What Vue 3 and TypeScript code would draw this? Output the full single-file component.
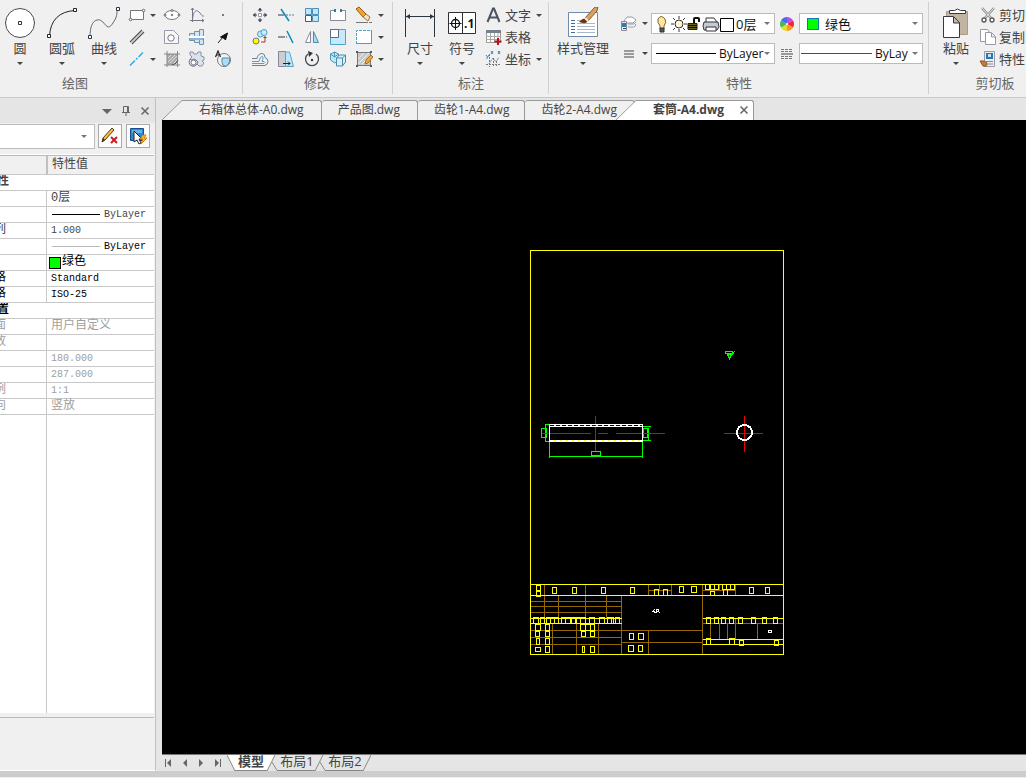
<script setup lang="ts">
import { ref } from 'vue'

type Box = [number, number, number, number]

interface PropRow {
  label?: string
  value?: string
  kind?: 'heading' | 'line' | 'tint'
  tone?: 'strong' | 'muted'
  wide?: boolean
}

const icons: Record<string, string> = {
  rect: '<path d="M2.500 4.500h13v9h-13z" fill="#fff" stroke="#777"/><circle cx="2.500" cy="13.500" r="1.300" fill="#fff" stroke="#667"/><circle cx="15.500" cy="4.500" r="1.300" fill="#fff" stroke="#667"/>',
  ellipse: '<ellipse cx="9" cy="9" rx="7" ry="4.500" fill="#fff" stroke="#777"/><g fill="#fff" stroke="#667"><circle cx="2" cy="9" r="1"/><circle cx="16" cy="9" r="1"/><circle cx="9" cy="4.500" r="1"/><circle cx="9" cy="9" r=".8"/></g>',
  graph: '<path d="M4.500 2v14M2 14.500h14M3 4l1.500-2L6 4M14 13l2 1.500-2 1.500" fill="none" stroke="#778"/><path d="M4.500 14C5 4 9 3 12 7s2 3 4 3" fill="none" stroke="#778"/>',
  dot: '<path d="M8 8h2v2H8z" fill="#778"/>',
  parallel: '<path d="M2 14L14 2M4 16L16 4" stroke="#555" stroke-width="1.200"/><path d="M3 15L15 3" stroke="#ccc"/>',
  contour: '<path d="M1.500 2.500h9l5 5v8h-14z" fill="#f8f8f8" stroke="#99a"/><circle cx="8" cy="10" r="3.200" fill="#fff" stroke="#778"/>',
  shaft: '<path d="M1.500 5.500h5v-2h5v-2h4v15h-4v-2h-5v-2h-5z" fill="#d4e5f3" stroke="#7890a8"/><path d="M6.500 5v8M11.500 3v12" stroke="#7890a8"/><path d="M1 8h16v2H1z" fill="#fff"/><path d="M2 10h13v2H2z" fill="#8db7da"/>',
  arrow: '<path d="M4 15l5-6" stroke="#222"/><path d="M13.500 5l-2 7-2-2-3-1z" fill="#111" stroke="#111"/>',
  centre: '<path d="M2 15.500L15 2.500" stroke="#2aaee8" stroke-width="1.500" stroke-dasharray="7 1.500 2 1.500"/>',
  hatch: '<path d="M4 4h11v8l-4 3H4z" fill="#aaa"/><path d="M1 4h16M4 1v16M1 15h16M14.500 1v16" stroke="#888"/><path d="M5 8l3-3M5 12l7-7M7 13l7-7M10 14l4-4" stroke="#ddd"/><path d="M9 15q5-1 6-5" fill="none" stroke="#555"/>',
  gear: '<path d="M2 2h3l1 2h3l1-2h3v4l3 1v3l-2 1 2 2-2 3h-3l-2-2-3 2H4l-2-2V9l2-2-2-2z" fill="#dce2ec" stroke="#8992a2"/><path d="M2 9.500l2 .5 2-1 2 1 2 2-1 2-2 2H4l-2-1-1-3z" fill="#eef1f6" stroke="#778"/><circle cx="5.500" cy="12.500" r="2.500" fill="#fff" stroke="#778"/>',
  sector: '<circle cx="10" cy="10" r="6.500" fill="#f4f4f4" stroke="#778"/><path d="M8 8h8q0 6-4 8.500-4-1-4-4z" fill="#a9ddfa" stroke="#589"/><path d="M1.500 7L4 1l2.500 6M2.500 5h3" fill="none" stroke="#222" stroke-width="1.200"/>',
  move: '<path d="M9 2v4M9 12v4M2 9h4M12 9h4" stroke="#445"/><path d="M6.500 4.500L9 2l2.500 2.500zM6.500 13.500L9 16l2.500-2.500zM4.500 6.500L2 9l2.500 2.500zM13.500 6.500L16 9l-2.500 2.500z" fill="#445"/><path d="M7.500 7.500h3v3h-3z" fill="#fff" stroke="#99a"/>',
  trim: '<path d="M1 9h6" stroke="#334"/><path d="M9 9h8" stroke="#48a" stroke-dasharray="2 1"/><path d="M4 3l8 12" stroke="#18b" stroke-width="1.500"/>',
  array: '<path d="M2.500 2.500h6v6h-6zM9.500 2.500h6v6h-6zM9.500 9.500h6v6h-6z" fill="#bfe7fb" stroke="#4d8fb5"/><path d="M2.500 9.500h6v6h-6z" fill="#fff" stroke="#556"/>',
  breakAt: '<path d="M6 4.500H1.500v10h15v-10H12" fill="#fff" stroke="#889"/><path d="M5 3h2v3H5zM11 3h2v3h-2z" fill="#18b"/>',
  erase: '<path d="M1 3l3-2 7 7-3 3z" fill="#f5a52a" stroke="#8b5a13"/><path d="M8 11l3-3 4 3-2 4z" fill="#f6e3c0" stroke="#96704a"/><path d="M1 16.500h12M14 16.500h3" stroke="#777"/>',
  copyObj: '<g fill="#c4eafc" stroke="#45a0cc"><circle cx="9.500" cy="6" r="3"/><circle cx="13" cy="4.500" r="3"/></g><circle cx="5" cy="13" r="3" fill="#ff0" stroke="#777"/><path d="M10 14h4V9" fill="none" stroke="#a33"/><path d="M12 10l2-2 2 2z" fill="#a33"/>',
  extend: '<path d="M1 9h5" stroke="#334"/><path d="M6 9h4" stroke="#334" stroke-dasharray="2 1"/><path d="M10 3l6 12" stroke="#18b" stroke-width="1.500"/>',
  mirror: '<path d="M7.500 3.500v11h-5z" fill="#fff" stroke="#889"/><path d="M10.500 3.500v11h5z" fill="#a5ddf5" stroke="#4c8da8"/>',
  scale: '<path d="M1.500 1.500h15v15h-15z" fill="#c5eafc" stroke="#4aa4cb"/><path d="M1.500 1.500h8v8h-8z" fill="#fff" stroke="#667"/>',
  stretch: '<path d="M1.500 2.500h15v13h-15z" fill="#fff"/><path d="M16.500 2v14M16 15.500H1" stroke="#889"/><path d="M1.500 16V2.500H16" fill="none" stroke="#4ba4cc" stroke-dasharray="3 1"/>',
  offset: '<path d="M1 8.500h5q1-5 5-5 3 0 3 4 3 1 3 4t-3 4H1" fill="none" stroke="#67829a"/><path d="M1 11.500h7q1-5 3-5t0 5h2q2 1 0 2H1" fill="none" stroke="#4aa4cb"/>',
  shear: '<path d="M1.500 1.500h7v15h-7z" fill="#c9ced3" stroke="#889"/><path d="M8.500 2h4l4 14.500h-8z" fill="#bfe7fb" stroke="#56a9cc"/><path d="M6 13.500h7M11 11.500l2 2-2 2" fill="none" stroke="#222"/>',
  rotate: '<path d="M5 4a6.500 6.500 0 1 0 8 0" fill="none" stroke="#445" stroke-width="1.300"/><path d="M5 1l5 2-4 4z" fill="#334"/><circle cx="9" cy="10" r="1.200" fill="#334"/>',
  solid: '<path d="M1.500 4l4-2 4 2v7l-4 2-4-3zM5.500 2v5l-4-3M5.500 7l4-3" fill="#bde6f9" stroke="#4b96bd"/><path d="M7.500 8l3-3h6v7l-3 4h-6zM7.500 8h6v8M13.500 8l3-3" fill="#d7f1fc" stroke="#4b8bb0"/>',
  hatchEdit: '<path d="M2.500 2.500h13v13h-13z" fill="#c9c9c9" stroke="#777"/><path d="M3 9l6-6M3 14L14 3M7 14l7-7" stroke="#eee"/><path d="M1 2h2M15 2h2M1 16h2M15 16h2" stroke="#555" stroke-width="2"/><path d="M10 14l1-4 5-5 2 2-5 6z" fill="#f2a62d" stroke="#a0702b"/>',
  textA: '<path d="M2.500 16L8 2.500h1L14.500 16M4.500 11.500h8" fill="none" stroke="#4c5460" stroke-width="2"/>',
  grid: '<path d="M1.500 2.500h14v12h-14z" fill="#fff" stroke="#999"/><path d="M1 2h15v3H1z" fill="#76818a"/><path d="M1 8.500h15M1 11.500h15M5.500 5v10M9.500 5v10M13 5v10" stroke="#aaa"/><path d="M13 10v7M9.500 13.500h7" stroke="#b3131b" stroke-width="2"/>',
  coord: '<path d="M4.500 4v13M1 14.500h15M4 14l4-6 3 4 3-5M8.500 8v9M11.500 11v6" fill="none" stroke="#778" stroke-dasharray="2 1"/><path d="M1 5l1.500 2M4 5L1.500 9M6 1l2 3M8 1L6 4M13 1l2 3M15 1l-2 3" stroke="#2f86d0"/>',
  layers: '<path d="M5 6l3-4h5l4 3-3 3H7zM9 9h6l2-2M9 12h6l2-2M15 8l2 2" fill="#fff" stroke="#99a"/><path d="M2.500 6.500h5v9h-5z" fill="#eee" stroke="#889"/><path d="M3 8h4v4H3z" fill="#2d7bb5"/><path d="M4 13.500h3" stroke="#444"/>',
  weight: '<path d="M5 6h10M5 9h10M5 12h10" stroke="#444" stroke-width="1"/>',
  wheel: '<path d="M9 9V2a7 7 0 0 1 6 3.500z" fill="#c44be8"/><path d="M9 9l6-3.500a7 7 0 0 1 0 7z" fill="#ef2b2b"/><path d="M9 9l6 3.500A7 7 0 0 1 9 16z" fill="#ff961f"/><path d="M9 9v7a7 7 0 0 1-6-3.500z" fill="#efd72d"/><path d="M9 9l-6 3.500a7 7 0 0 1 0-7z" fill="#43bd49"/><path d="M9 9L3 5.500A7 7 0 0 1 9 2z" fill="#4b67f2"/><circle cx="9" cy="9" r="1" fill="#fff"/>',
  linetype: '<path d="M3 4.500h12M3 6.500h12M3 11.500h12M3 13.500h12" stroke="#777" stroke-dasharray="3 1"/><path d="M3 9h12" stroke="#444"/>',
  cut: '<path d="M3 2l9 10M15 2L6 12" stroke="#888" stroke-width="2.500"/><path d="M3 2l9 10M15 2L6 12" stroke="#eee"/><circle cx="5" cy="14" r="2" fill="#fff" stroke="#555" stroke-width="1.300"/><circle cx="13" cy="14" r="2" fill="#fff" stroke="#555" stroke-width="1.300"/>',
  copy: '<path d="M1.500 1.500h7l2 3v9h-9z" fill="#fff" stroke="#99a"/><path d="M6.500 4.500h6l4 4v8h-10zM12.500 5v4h4" fill="#fff" stroke="#99a"/>',
  match: '<path d="M5.500 1.500h10v15h-10z" fill="#eee" stroke="#99a"/><path d="M7 3h7v6H7z" fill="#2a77b6"/><path d="M9 4h3v3H9z" fill="#bfe0f5"/><path d="M7 11.500h7M9 14h5" stroke="#888"/><path d="M1 11q5-1 7 2 1 4-4 3z" fill="#c47b35" stroke="#8b5a2b"/>',
}

const big: Record<string, string> = {
  circle: '<circle cx="16" cy="16" r="14.500" fill="#fff" stroke="#444a54"/><path d="M14.500 14.500h3v3h-3z" fill="#fff" stroke="#333"/>',
  arc: '<path d="M3.500 29Q5 5 29 3.500" fill="none" stroke="#222"/><path d="M1.500 27.500h3v3h-3zM27.500 1.500h3v3h-3z" fill="#fff" stroke="#222"/>',
  curve: '<path d="M2 30C2 21 4 14 9 13c8-2 9 14 16 3 4-6 4-9 4-13" fill="none" stroke="#667"/><path d="M.5 28.500h3v3h-3zM28.500.5h3v3h-3z" fill="#fff" stroke="#334"/>',
  dimension: '<path d="M1.500 2v28M30.500 2v28M2 9.500h28" stroke="#2d3540"/><path d="M2 9.500l4-2.500v5zM30 9.500L26 7v5z" fill="#2d3540"/>',
  symbol: '<path d="M2.500 5.500h27v21h-27zM16.500 5v21" fill="#fff" stroke="#2d3035"/><circle cx="9.500" cy="16.500" r="4" fill="none" stroke="#111" stroke-width="1.300"/><path d="M9.500 10v13M3.500 16.500h12" stroke="#111"/><text x="18" y="21" font-size="12" font-weight="700" fill="#111">.1</text>',
  styles: '<path d="M1.500 5.500h29v24h-29z" fill="#fff" stroke="#6f8ba8"/><path d="M4 13.500h4M4 16.500h4M4 19.500h4M4 22.500h4M4 25.500h4" stroke="#456b94"/><path d="M10 13.500h10M10 16.500h18M10 19.500h18M10 22.500h18M10 25.500h18" stroke="#a8b8cb"/><path d="M18 11L28 0h3l-1 4-9 10z" fill="#dba05f" stroke="#8a5a2b"/><path d="M12 15q5-6 9-2-1 5-9 2z" fill="#6b3413"/><path d="M18 11l3 3" stroke="#eee" stroke-width="2"/>',
  paste: '<path d="M6.500 4.500h21v23h-21z" fill="#c2b4a2" stroke="#aa9a86"/><path d="M9.500 6.500v-3h5q3-3 6 0h5v3z" fill="#fff" stroke="#333a44"/><path d="M3.500 9.500h10l6 6v15h-16zM13.500 10v6h6" fill="#fff" stroke="#333a44"/>',
}

const drawBig = [
  { icon: 'circle', label: '圆' },
  { icon: 'arc', label: '圆弧' },
  { icon: 'curve', label: '曲线' },
]
const drawSmall = ['rect', '+', 'ellipse', 'graph', 'dot', 'parallel', '', 'contour', 'shaft', 'arrow', 'centre', '+', 'hatch', 'gear', 'sector']
const modifySmall = [
  'move', 'trim', 'array', 'breakAt', 'erase', '+',
  'copyObj', 'extend', 'mirror', 'scale', 'stretch', '+',
  'offset', 'shear', 'rotate', 'solid', 'hatchEdit', '+',
]
const annotateBig = [
  { icon: 'dimension', label: '尺寸' },
  { icon: 'symbol', label: '符号' },
]
const annotateList = [
  { icon: 'textA', label: '文字', more: true },
  { icon: 'grid', label: '表格', more: false },
  { icon: 'coord', label: '坐标', more: true },
]
const clipList = [
  { icon: 'cut', label: '剪切' },
  { icon: 'copy', label: '复制' },
  { icon: 'match', label: '特性' },
]

const files = ['右箱体总体-A0.dwg', '产品图.dwg', '齿轮1-A4.dwg', '齿轮2-A4.dwg']
const sheet = ref('模型')

const rows: PropRow[] = [
  { label: '性', kind: 'heading' },
  { value: '0层', wide: true },
  { value: 'ByLayer', kind: 'line' },
  { label: '列', value: '1.000' },
  { value: 'ByLayer', kind: 'line', tone: 'strong' },
  { value: '绿色', kind: 'tint', tone: 'strong', wide: true },
  { label: '格', value: 'Standard', tone: 'strong' },
  { label: '格', value: 'ISO-25', tone: 'strong' },
  { label: '置', kind: 'heading', tone: 'strong' },
  { label: '面', value: '用户自定义', tone: 'muted', wide: true },
  { label: '放', value: '', tone: 'muted' },
  { value: '180.000', tone: 'muted' },
  { value: '287.000', tone: 'muted' },
  { label: '例', value: '1:1', tone: 'muted' },
  { label: '向', value: '竖放', tone: 'muted', wide: true },
]

const textBoxes: Box[] = [
  [536, 585, 4, 5], [536, 591, 4, 5], [552, 587, 4, 6], [572, 587, 4, 6], [601, 587, 4, 6], [630, 587, 4, 6],
  [654, 589, 4, 6], [663, 589, 4, 6], [679, 586, 4, 6], [691, 586, 5, 6],
  [705, 584, 4, 5], [710, 584, 4, 5], [714, 584, 4, 5], [722, 584, 4, 5], [726, 584, 4, 5], [730, 584, 4, 5],
  [710, 591, 4, 4], [723, 589, 4, 6], [749, 587, 4, 6], [765, 587, 4, 6],
  [533, 617, 5, 6], [540, 617, 4, 6], [546, 617, 4, 6], [550, 617, 4, 6], [554, 617, 4, 6], [561, 617, 4, 6],
  [565, 617, 5, 6], [571, 617, 4, 6], [576, 617, 4, 6], [580, 617, 5, 6], [589, 617, 5, 6], [599, 617, 5, 6],
  [607, 617, 4, 6], [611, 617, 2, 6], [615, 617, 4, 6],
  [535, 624, 5, 6], [545, 624, 4, 6], [580, 624, 5, 6], [585, 624, 5, 6], [590, 624, 4, 6],
  [535, 631, 4, 5], [545, 631, 4, 5], [581, 631, 4, 5], [590, 631, 4, 5],
  [536, 638, 3, 6], [545, 638, 4, 6],
  [535, 647, 5, 4], [545, 646, 4, 6], [582, 646, 2, 6], [590, 646, 4, 6],
  [629, 633, 4, 6], [638, 633, 5, 6], [628, 645, 5, 6], [638, 645, 4, 6],
  [706, 617, 4, 6], [714, 617, 4, 6], [721, 617, 4, 6], [729, 617, 4, 6], [738, 617, 4, 6], [751, 617, 4, 6],
  [762, 617, 4, 6], [773, 617, 4, 6],
  [706, 638, 4, 6], [729, 638, 5, 6], [739, 640, 4, 5], [774, 640, 4, 5],
]

const hatchMarks = Array.from({ length: 15 }, (_, i) => 553 + i * 6)
</script>

<template>
  <div class="app">
    <header class="ribbon">
      <section class="group draw">
        <div class="body">
          <button v-for="b in drawBig" :key="b.label" class="big" type="button">
            <svg class="i32" viewBox="0 0 32 32" v-html="big[b.icon]" /><span>{{ b.label }}</span><i class="caret" />
          </button>
          <div class="small-grid">
            <template v-for="(name, n) in drawSmall" :key="n">
              <button v-if="name === '+'" class="tool" type="button" aria-label="更多"><i class="caret" /></button>
              <span v-else-if="!name" />
              <button v-else class="tool" type="button" :aria-label="name"><svg class="i18" viewBox="0 0 18 18" v-html="icons[name]" /></button>
            </template>
          </div>
        </div>
        <h2>绘图</h2>
      </section>

      <section class="group modify">
        <div class="body">
          <div class="small-grid">
            <button v-for="(name, n) in modifySmall" :key="n" class="tool" type="button" :aria-label="name">
              <i v-if="name === '+'" class="caret" />
              <svg v-else class="i18" viewBox="0 0 18 18" v-html="icons[name]" />
            </button>
          </div>
        </div>
        <h2>修改</h2>
      </section>

      <section class="group annotate">
        <div class="body">
          <button v-for="b in annotateBig" :key="b.label" class="big" type="button">
            <svg class="i32" viewBox="0 0 32 32" v-html="big[b.icon]" /><span>{{ b.label }}</span><i class="caret" />
          </button>
          <div class="list">
            <button v-for="b in annotateList" :key="b.label" class="row" type="button">
              <svg class="i18" viewBox="0 0 18 18" v-html="icons[b.icon]" /><span>{{ b.label }}</span><i v-if="b.more" class="caret" />
            </button>
          </div>
        </div>
        <h2>标注</h2>
      </section>

      <section class="group props">
        <div class="body">
          <button class="big" type="button">
            <svg class="i32" viewBox="0 0 32 32" v-html="big.styles" /><span>样式管理</span><i class="caret" />
          </button>
          <div class="prop-grid">
            <button class="tool" type="button" aria-label="图层"><svg class="i18" viewBox="0 0 18 18" v-html="icons.layers" /></button>
            <button class="tool" type="button" aria-label="图层选项"><i class="caret" /></button>
            <div class="combo">
              <svg class="layer-state" viewBox="0 0 80 20" aria-hidden="true">
                <path d="M4 12Q1 8 2 5q3-5 7 0 2 3-1 7v3H4z" fill="#ffe7a0" stroke="#7b6232" />
                <path d="M4 14h4v4H4z" fill="#555" stroke="#333" />
                <g stroke="#333"><path d="M23 2v3M23 15v3M15 10h3M28 10h3M17 4l2 2M29 4l-2 2M17 16l2-2M29 16l-2-2" /><circle cx="23" cy="10" r="4" fill="#fff4d5" /></g>
                <path d="M32 9.500h9v6h-9z" fill="#6b6310" stroke="#222" /><path d="M32 11.500h9M32 13.500h9" stroke="#111" /><path d="M38 9V5q0-1 1-1h3q1 0 1 1v3" fill="none" stroke="#111" stroke-width="2" />
                <path d="M50 8V4h8l3 4" fill="#fff" stroke="#333" /><path d="M48 8h14l1 5-2 3H48l-1-4z" fill="#c3ccd6" stroke="#333" /><path d="M50 13h10v4H50z" fill="#fff" stroke="#333" />
                <path d="M64.500 4.500h13v13h-13z" fill="#fff" stroke="#000" />
              </svg>
              <select aria-label="当前图层"><option>0层</option></select><i class="caret grey" />
            </div>
            <button class="tool" type="button" aria-label="颜色"><svg class="i18" viewBox="0 0 18 18" v-html="icons.wheel" /></button>
            <div class="combo colour"><i class="swatch" /><select aria-label="当前颜色"><option>绿色</option></select><i class="caret grey" /></div>
            <button class="tool" type="button" aria-label="线宽"><svg class="i18" viewBox="0 0 18 18" v-html="icons.weight" /></button>
            <button class="tool" type="button" aria-label="线宽选项"><i class="caret" /></button>
            <div class="combo by-layer"><i class="stroke" /><select aria-label="当前线宽"><option>ByLayer</option></select><i class="caret grey" /></div>
            <button class="tool" type="button" aria-label="线型"><svg class="i18" viewBox="0 0 18 18" v-html="icons.linetype" /></button>
            <div class="combo by-layer line-type"><i class="stroke red" /><select aria-label="当前线型"><option>ByLayer</option></select><i class="caret grey" /></div>
          </div>
        </div>
        <h2>特性</h2>
      </section>

      <section class="group clip">
        <div class="body">
          <button class="big" type="button">
            <svg class="i32" viewBox="0 0 32 32" v-html="big.paste" /><span>粘贴</span><i class="caret" />
          </button>
          <div class="list">
            <button v-for="b in clipList" :key="b.label" class="row" type="button">
              <svg class="i18" viewBox="0 0 18 18" v-html="icons[b.icon]" /><span>{{ b.label }}</span>
            </button>
          </div>
        </div>
        <h2>剪切板</h2>
      </section>
    </header>

    <div class="work">
      <aside class="panel">
        <div class="panel-title">
          <button type="button" aria-label="菜单"><svg width="10" height="10" viewBox="0 0 10 10"><path d="M0 3h10L5 8z" fill="#666" /></svg></button>
          <button type="button" aria-label="固定"><svg width="10" height="10" viewBox="0 0 10 10"><path d="M2.500 6V.5h5V6M1 6.500h8M5 7v3M6.500 1v5" fill="none" stroke="#666" /></svg></button>
          <button type="button" aria-label="关闭"><svg width="10" height="10" viewBox="0 0 10 10"><path d="M1.500 1.500l7 7M8.500 1.500l-7 7" stroke="#666" stroke-width="1.500" /></svg></button>
        </div>
        <div class="picker">
          <div class="pick-combo"><select aria-label="选择对象"><option /></select><i class="caret grey" /></div>
          <button type="button" aria-label="清除选择">
            <svg class="i18" viewBox="0 0 18 18"><path d="M1 15l1-4L11 1l2 2-9 10z" fill="#f8bd42" stroke="#513b17" /><path d="M1 15l1-4 2 2z" fill="#333" /><path d="M10 10l6 6M16 10l-6 6" stroke="#d11a1a" stroke-width="2" /></svg>
          </button>
          <button type="button" aria-label="快速选择">
            <svg class="i18" viewBox="0 0 18 18"><path d="M1.500 1.500h13v12h-13z" fill="#3287cc" stroke="#194f91" /><path d="M3 3h10v3H3z" fill="#65b5ec" /><path d="M5 4v11l3-2 2 4 2-1-2-4h3z" fill="#fff" stroke="#222" /><path d="M14 8l-3 4h3l-2 5 6-6h-3l2-3z" fill="#ffba22" stroke="#d77b0c" /></svg>
          </button>
        </div>
        <div class="table-box">
          <table>
            <thead><tr><th /><th>特性值</th></tr></thead>
            <tbody>
              <tr v-for="(r, n) in rows" :key="n" :class="[r.kind, r.tone]">
                <td v-if="r.kind === 'heading'" colspan="2"><div class="cut-label long">{{ r.label }}</div></td>
                <template v-else>
                  <td><div class="cut-label">{{ r.label }}</div></td>
                  <td class="value"><div :class="{ wide: r.wide }"><i v-if="r.kind" />{{ r.value }}</div></td>
                </template>
              </tr>
            </tbody>
          </table>
          <div class="rest" />
        </div>
        <div class="hint" />
      </aside>

      <main class="stage">
        <nav class="file-tabs">
          <svg class="slant" viewBox="0 0 21 20"><path d="M0 20L20 .5h1V20z" fill="#f0f0f0" /><path d="M0 20L20 .5h1" fill="none" stroke="#999" /></svg>
          <button v-for="(f, n) in files" :key="f" type="button" :class="'file f' + n">{{ f }}</button>
          <svg class="slant over" viewBox="0 0 21 20"><path d="M0 20L20 .5h1V20z" fill="#fff" /><path d="M0 20L20 .5h1" fill="none" stroke="#999" /></svg>
          <div class="file current"><button type="button">套筒-A4.dwg</button><button type="button" class="close" aria-label="关闭"><svg width="8" height="8" viewBox="0 0 8 8"><path d="M.5.5l7 7M7.500.5l-7 7" stroke="#666" stroke-width="1.500" /></svg></button></div>
        </nav>

        <div class="canvas">
          <svg class="sheet" width="254" height="405" viewBox="530 250 254 405" shape-rendering="crispEdges" fill="none">
            <g transform="translate(.5 .5)">
              <path stroke="#946800" d="M530 601H621M530 606H621M530 612H621M544 584V618M558 595V618M585 584V618M606 595V618M648 584V595M648 590H671M659 584V590M671 584V595M621 595V654M530 630H702M530 637H621M530 644H621M621 642H702M552 623V654M576 623V654M598 623V654M648 630V654M702 584V654M702 590H735M719 584V590M735 584V595M702 623H783M710 623V639M719 623V639M727 623V639M735 618V639M757 623V639" />
              <path stroke="#ff0" d="M530 250H783V654H530zM530 584H783M530 595H783M530 618H621M530 623H621M702 618H783M702 639H783M702 644H783" />
              <rect v-for="(b, n) in textBoxes" :key="n" :x="b[0]" :y="b[1]" :width="b[2]" :height="b[3]" stroke="#ff0" />
              <path stroke="#fff" d="M768 630h3v2h-3zM653 609h1M652 610h1M654 611h-3M653 612h2M656 609h2v2h-2zM655 612h1M658 612h1" />

              <path stroke="#0f0" d="M541 428h5v9h-5zM545 424V441M544 424H549M544 441H549M643 428h4v9h-4zM648 427V440M642 426H650M642 440H650M549 441V457M642 441V457M549 456H642" />
              <path stroke="#e00" d="M541 433H590M597 433H607M615 433H664M595 415V450M723 433H762M744 415V451" />
              <path stroke="#fff" d="M549 424H642V441H549zM549 426H642M549 440H642" />
              <path v-for="x in hatchMarks" :key="x" stroke="#ff0" :d="`M${x} 425h2M${x} 440h2`" />
              <path stroke="#0f0" d="M591 451h9v4h-9z" />
              <circle cx="744" cy="432" r="7.500" stroke="#fff" stroke-width="2" />
              <path stroke="#0f0" d="M725 351h7v2h-7zM726 354h6M727 354l2 4 2-4M732 354l2-3" />
            </g>
          </svg>
        </div>

        <nav class="sheet-tabs">
          <div class="pager">
            <button type="button" aria-label="第一个"><svg width="8" height="8" viewBox="0 0 8 8"><path d="M0 0h1v8H0zM6 0v8L2 4z" fill="#666" /></svg></button>
            <button type="button" aria-label="上一个"><svg width="8" height="8" viewBox="0 0 8 8"><path d="M6 0v8L2 4z" fill="#666" /></svg></button>
            <button type="button" aria-label="下一个"><svg width="8" height="8" viewBox="0 0 8 8"><path d="M2 0v8l4-4z" fill="#666" /></svg></button>
            <button type="button" aria-label="最后一个"><svg width="8" height="8" viewBox="0 0 8 8"><path d="M7 0h1v8H7zM2 0v8l4-4z" fill="#666" /></svg></button>
          </div>
          <svg width="8" height="16" viewBox="0 0 8 16"><path d="M0 0h8v16z" fill="#fff" /><path d="M0 0l8 16" stroke="#888" /></svg>
          <button type="button" class="sheet-tab active" @click="sheet = '模型'">模型</button>
          <svg width="12" height="16" viewBox="0 0 12 16"><path d="M0 0h8L0 16z" fill="#fff" /><path d="M8 0L0 16M5 7l5 8.500h2" fill="none" stroke="#888" /></svg>
          <button type="button" class="sheet-tab" @click="sheet = '布局1'">布局1</button>
          <svg width="12" height="16" viewBox="0 0 12 16"><path d="M8 0L0 16M5 7l5 8.500h2" fill="none" stroke="#888" /></svg>
          <button type="button" class="sheet-tab" @click="sheet = '布局2'">布局2</button>
          <svg width="8" height="16" viewBox="0 0 8 16"><path d="M8 0L0 16" stroke="#888" /></svg>
        </nav>
      </main>
    </div>
    <footer class="status" />
  </div>
</template>

<style>
html,
body {
  margin: 0;
  overflow: hidden;
}
</style>

<style scoped>
.app {
  display: flex;
  flex-direction: column;
  height: 100vh;
  overflow: hidden;
  background: #e5e5e5;
  color: #444;
  font: 13px/16px "Open Sans", "Noto Sans CJK SC", sans-serif;
}
.app *,
.app :deep(*) {
  box-sizing: border-box;
}
button {
  display: flex;
  align-items: center;
  justify-content: center;
  margin: 0;
  padding: 0;
  border: 0;
  background: none;
  color: inherit;
  font: inherit;
  white-space: nowrap;
}
svg {
  display: block;
  flex: none;
}
select {
  flex: 1;
  min-width: 0;
  height: 18px;
  margin: 0;
  padding: 0;
  border: 0;
  outline: 0;
  background: none;
  color: #111;
  font: inherit;
  appearance: none;
}
.i18 {
  width: 18px;
  height: 18px;
}
.i32 {
  width: 32px;
  height: 32px;
}
.caret {
  flex: none;
  width: 0;
  height: 0;
  border: solid transparent;
  border-width: 3px 3px 0;
  border-top-color: #444;
}
.caret.grey {
  border-top-color: #777;
}

.ribbon {
  display: flex;
  flex: none;
  height: 98px;
  border-bottom: 1px solid #c8c8c8;
  background: #f0f0f0;
}
.group {
  position: relative;
  display: flex;
  flex: none;
  flex-direction: column;
  padding-top: 4px;
}
.group::after {
  content: "";
  position: absolute;
  top: 2px;
  right: 0;
  bottom: 3px;
  width: 1px;
  background: #d0d0d0;
}
.body {
  display: flex;
  height: 66px;
}
h2 {
  margin: 0;
  padding-top: 5px;
  color: #666;
  font: inherit;
  text-align: center;
}
.big {
  flex-direction: column;
  justify-content: flex-start;
  width: 42px;
  padding-top: 3px;
}
.big > span {
  margin-top: 1px;
}
.big .caret {
  margin-top: 6px;
}
.small-grid {
  display: grid;
  grid-auto-rows: 22px;
}
.list {
  display: flex;
  flex-direction: column;
}
.row {
  justify-content: flex-start;
  height: 22px;
}
.row span {
  margin-left: 2px;
}
.row .caret {
  margin-left: 5px;
}
.draw {
  width: 243px;
}
.draw .body {
  margin-left: -1px;
}
.draw .small-grid {
  grid-template-columns: 18px 14px 23px 27px 26px;
  padding-left: 3px;
}
.draw h2 {
  padding-right: 93px;
}
.modify {
  width: 150px;
  padding-left: 4px;
}
.modify .small-grid {
  grid-template-columns: repeat(5, 26px) 8px;
}
.annotate {
  width: 156px;
  padding-left: 6px;
}
.annotate .list {
  padding-left: 2px;
}
.annotate h2,
.modify h2 {
  padding-right: 6px;
}
.props {
  width: 380px;
}
.props .big {
  width: 68px;
}
.prop-grid {
  display: grid;
  grid-template-columns: 22px 12px 124px 24px 124px;
  grid-auto-rows: 21px;
  gap: 9px 0;
  padding-top: 9px;
}
.combo {
  display: flex;
  align-items: center;
  padding: 0 4px;
  border: 1px solid #bbb;
  background: #fff;
}
.by-layer {
  font-size: 12px;
}
.layer-state {
  width: 80px;
  height: 20px;
}
.colour {
  padding-left: 7px;
}
.swatch {
  width: 12px;
  height: 12px;
  margin-right: 6px;
  border: 1px solid #1674b8;
  background: #0f0;
}
.stroke {
  flex: none;
  width: 60px;
  height: 1px;
  margin-right: 3px;
  background: #000;
}
.stroke.red {
  width: 71px;
  background: #f00;
}
.line-type {
  padding-left: 1px;
}
.line-type .caret {
  margin-left: 4px;
}
.clip {
  width: 132px;
  padding-left: 6px;
}
.clip .list {
  padding-left: 2px;
}
.clip h2 {
  padding-right: 6px;
}

.work {
  display: flex;
  flex: 1;
  min-height: 0;
}
.panel {
  display: flex;
  flex: none;
  flex-direction: column;
  width: 156px;
  border-right: 1px solid #c0c0c0;
  border-bottom: 1px solid #fff;
  background: #f0f0f0;
}
.panel-title {
  display: flex;
  flex: none;
  align-items: center;
  justify-content: flex-end;
  gap: 9px;
  height: 25px;
  padding-right: 5px;
  background: #e5e5e5;
}
.picker {
  display: flex;
  flex: none;
  gap: 3px;
  height: 32px;
  padding: 1px 5px 6px 0;
  border-bottom: 1px solid #fff;
}
.picker > button {
  width: 24px;
  height: 24px;
  border: 1px solid #aaa;
  background: #fdfdfd;
}
.picker > button:last-child {
  margin-left: 1px;
}
.pick-combo {
  display: flex;
  flex: 1;
  align-items: center;
  height: 25px;
  padding-right: 7px;
  border: 1px solid #bbb;
  border-left: 0;
  background: #fff;
}
.table-box {
  display: flex;
  flex: 1;
  flex-direction: column;
  min-height: 0;
  margin-right: 1px;
  border-top: 1px solid #bbb;
  background: #fff;
}
table {
  width: 100%;
  border-spacing: 0;
  table-layout: fixed;
  font: 10px/15px "Liberation Mono", "Noto Sans CJK SC", monospace;
}
th,
td {
  height: 16px;
  padding: 0;
  border-bottom: 1px solid #c8c8c8;
  text-align: left;
}
th {
  height: 19px;
  background: #f0f0f0;
  font-size: 12px;
  font-weight: 400;
}
th:first-child {
  width: 46px;
}
th + th {
  padding-left: 4px;
  border-left: 2px solid #c0c0c0;
}
.cut-label {
  display: flex;
  justify-content: flex-end;
  width: 6px;
  height: 15px;
  overflow: hidden;
  font-size: 12px;
}
.cut-label.long {
  width: 9px;
  font-weight: 700;
}
.value {
  border-left: 1px solid #c8c8c8;
}
.value div {
  display: flex;
  align-items: center;
  height: 15px;
  padding-left: 4px;
}
.value .wide {
  font-size: 12px;
}
.strong {
  color: #000;
}
.muted {
  color: #a0a0a0;
}
.line i {
  width: 48px;
  height: 1px;
  margin: 0 4px 0 1px;
  background: #000;
}
.line.strong i {
  background: #bbb;
}
.tint .value div {
  padding-left: 2px;
}
.tint i {
  width: 12px;
  height: 12px;
  margin-right: 1px;
  border: 1px solid #000;
  background: #0f0;
}
.rest {
  flex: 1;
  width: 47px;
  border-right: 1px solid #c8c8c8;
}
.hint {
  flex: none;
  height: 53px;
  margin: 4px 1px 0 0;
  border-top: 1px solid #bbb;
}

.stage {
  display: flex;
  flex: 1;
  flex-direction: column;
  min-width: 0;
  margin-left: 6px;
}
.file-tabs {
  display: flex;
  flex: none;
  align-items: flex-end;
  height: 22px;
  font-size: 12px;
}
.slant {
  width: 21px;
  height: 20px;
}
.slant.over {
  z-index: 1;
  margin-left: -19px;
}
.file {
  height: 20px;
  padding: 0 17px 2px 16px;
  border-top: 1px solid #999;
  border-right: 1px solid #999;
  border-radius: 0 3px 0 0;
  background: #f0f0f0;
}
.f1,
.f2,
.f3 {
  border-radius: 3px 3px 0 0;
}
.f2 {
  padding: 0 15px 2px 16px;
}
.current {
  display: flex;
  align-items: center;
  gap: 16px;
  padding: 0 5px 2px 16px;
  background: #fff;
  font-weight: 700;
}
.canvas {
  position: relative;
  flex: 1;
  overflow: hidden;
  background: #000;
}
.sheet {
  position: absolute;
  top: 130px;
  left: 368px;
}
.sheet-tabs {
  display: flex;
  flex: none;
  height: 17px;
  border-top: 1px solid #777;
}
.pager {
  display: flex;
  gap: 8px;
  width: 65px;
  padding-left: 3px;
}
.pager button {
  width: 8px;
}
.sheet-tab {
  width: 36px;
  height: 16px;
  padding-bottom: 3px;
  border-bottom: 1px solid #888;
  line-height: 12px;
}
.sheet-tab.active {
  width: 32px;
  background: #fff;
  font-weight: 700;
}
.status {
  flex: none;
  height: 7px;
  border-bottom: 1px solid #f0f0f0;
  background: #cdcdcd;
}
</style>
